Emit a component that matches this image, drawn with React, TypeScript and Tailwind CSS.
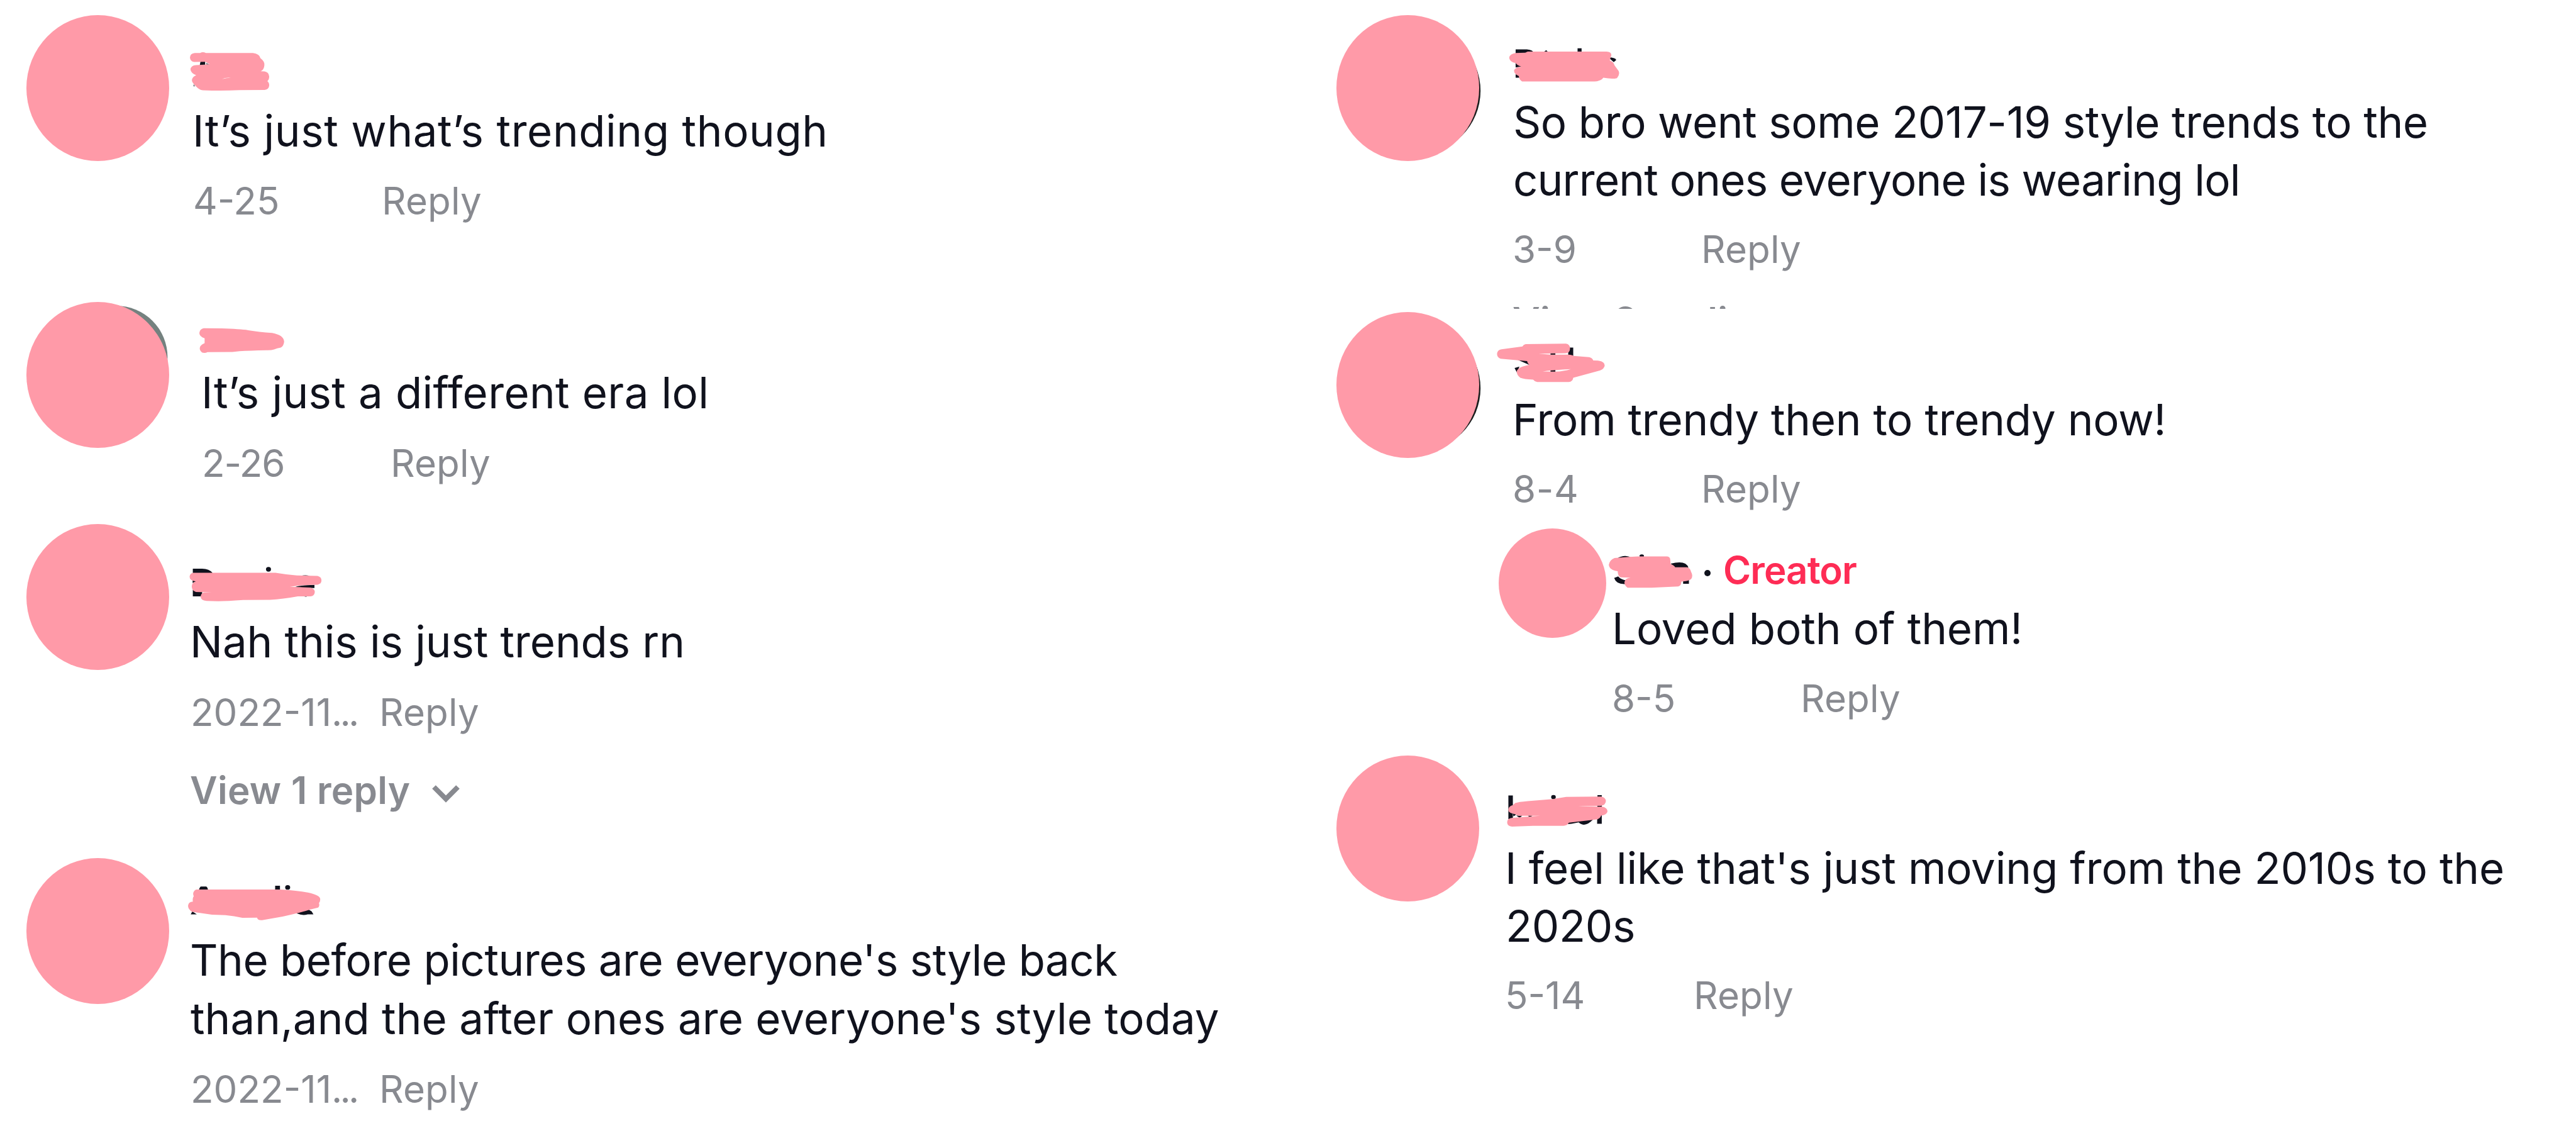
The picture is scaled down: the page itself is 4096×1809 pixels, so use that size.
import type { ReactNode } from "react";

const PINK = "#ff9aa8";
const INK = "#10121d";

/* Round avatar cover; `peek` is the part of the photo that shows at its rim. */
function Avatar({ className, peek }: { className: string; peek?: ReactNode }) {
  return (
    <svg viewBox="0 0 266 272" preserveAspectRatio="none" className={`block shrink-0 overflow-visible ${className}`}>
      {peek}
      <ellipse cx="133" cy="136" rx="133" ry="136" fill={PINK} />
    </svg>
  );
}

/* Brush marks over a user name. */
function Marker({ box, transform, ink, children }: { box: string; transform: string; ink?: ReactNode; children: ReactNode }) {
  return (
    <svg viewBox={box} className="block h-[119.5px] w-[256px] shrink-0 overflow-visible">
      <g transform={transform}>
        <g fill={INK}>{ink}</g>
        <g fill={PINK} fillRule="evenodd">{children}</g>
      </g>
    </svg>
  );
}

function Line({ className, children }: { className: string; children: ReactNode }) {
  return <p className={`whitespace-nowrap text-[69px] text-[#10121d] ${className}`}>{children}</p>;
}

function Meta({ className, date }: { className: string; date: ReactNode }) {
  return (
    <div className={`flex whitespace-nowrap text-[60px] leading-[72px] text-[#888a90] ${className}`}>
      <span className="w-[300px]">{date}</span>
      <span className="tracking-[0.2px]">Reply</span>
    </div>
  );
}

const cutDate = (
  <>
    2022-11<span className="tracking-[-3.8px]">...</span>
  </>
);

export default function App() {
  return (
    <main className="flex h-[1809px] w-[4096px] overflow-hidden bg-white pt-[24px] font-['Inter',sans-serif]">
      <div className="flex w-[2125px] flex-col pl-[42px]">
        <article className="flex h-[456px] shrink-0">
          <Avatar className="h-[232px] w-[227px]" />
          <div className="ml-[37px]">
            <div className="h-[138px]">
              <Marker
                box="359 28 300 140"
                transform="translate(340 80) scale(.33333)"
                ink={
                  <>
                    <path d="M102 104H128V124H98Z" />
                    <path d="M134 110L156 122H134Z" fill="#8a8088" />
                    <path d="M64 230L72 242H62Z" fill="#6f7077" />
                  </>
                }
              >
                <path d="M70 56L100 56Q115 47 132 56L395 56Q432 60 437 85Q462 103 459 125Q457 150 438 158L460 159Q484 163 486 187Q486 205 476 213Q487 222 486 238Q484 260 460 262L320 263Q230 268 115 264Q95 262 75 240Q53 220 54 207Q56 190 78 180Q48 168 46 148Q48 124 78 123L155 119L130 105L66 106Q44 102 43 80Q45 58 70 56ZM222 202Q245 190 275 195Q250 194 222 202Z" />
              </Marker>
            </div>
            <Line className="leading-[92px] tracking-[0.58px]">It’s just what’s trending though</Line>
            <Meta className="ml-[1px] mt-[29px]" date="4-25" />
          </div>
        </article>

        <article className="flex h-[353px] shrink-0">
          <Avatar className="h-[232px] w-[227px]" peek={<circle cx="167" cy="103" r="96" fill="#74817f" />} />
          <div className="ml-[51px]">
            <div className="h-[98px]">
              <Marker box="375 563 300 140" transform="translate(0 530) scale(.8929 .33333)">
                <path d="M425 246L462 247Q500 250 518 257Q540 267 568 272Q592 284 593 320Q592 345 586 354Q578 358 572 364Q566 370 556 369Q520 371 500 374L485 378L433 379Q428 386 422 382Q416 370 417 355Q418 338 427 329L427 302Q416 292 416 272Q417 250 425 246Z" />
              </Marker>
            </div>
            <Line className="leading-[92px] tracking-[0.35px]">It’s just a different era lol</Line>
            <Meta className="ml-[1px] mt-[30px]" date={<span className="tracking-[-1.2px]">2-26</span>} />
          </div>
        </article>

        <article className="flex h-[531px] shrink-0">
          <Avatar className="h-[232px] w-[227px]" />
          <div className="ml-[31px]">
            <div className="h-[141px]">
              <Marker
                box="351.6 976 300 140"
                transform="translate(340 1040) scale(.33333 .43367)"
                ink={
                  <>
                    <path d="M58 44H110Q150 45 168 62L150 70H58ZM57 95H90L57 106ZM58 135H110V163H58Z" />
                    <ellipse cx="481" cy="47" rx="14" ry="10" />
                    <path d="M660 76Q686 69 712 76ZM628 124Q650 116 738 114V127ZM678 162Q690 167 700 162Z" />
                  </>
                }
              >
                <path d="M60 62L520 62Q580 70 640 73L755 75Q777 80 777 94Q777 110 755 113Q680 113 600 122L715 125Q740 130 740 144Q738 162 715 163L645 163Q560 175 490 178L340 179Q250 184 200 184L135 183Q102 180 102 165Q102 150 120 147L165 146L75 144Q52 138 52 120Q53 103 75 99Q40 96 40 79Q42 64 60 62Z" />
              </Marker>
            </div>
            <Line className="ml-[2px] leading-[92px] tracking-[-0.1px]">Nah this is just trends rn</Line>
            <Meta className="ml-[3px] mt-[30px]" date={cutDate} />
            <div className="ml-[2px] mt-[52px] flex items-center text-[60px] leading-[72px] font-semibold tracking-[0.3px] text-[#888a90]">
              <span className="whitespace-nowrap">View 1 reply</span>
              <svg viewBox="0 0 44 28" className="ml-[35px] mt-[12px] h-[28px] w-[44px]" fill="none" stroke="currentColor" strokeWidth="8">
                <path d="M3 3L22 22L41 3" />
              </svg>
            </div>
          </div>
        </article>

        <article className="flex shrink-0">
          <Avatar className="h-[232px] w-[227px]" />
          <div className="ml-[32px]">
            <div className="h-[116px]">
              <Marker
                box="352.7 1599 300 140"
                transform="translate(340 1040) scale(.33333 .43367)"
                ink={
                  <>
                    <path d="M92 1426Q97 1411 104 1411H132Q140 1413 143 1426ZM518 1408H545V1428H518ZM46 1531L55 1518L80 1531ZM635 1522L700 1508L722 1518L732 1531H700Q670 1538 640 1527Z" />
                    <ellipse cx="588" cy="1415" rx="14" ry="10" />
                  </>
                }
              >
                <path d="M78 1424H545Q640 1428 700 1437Q770 1448 770 1466Q770 1477 763 1482Q768 1495 758 1502L715 1510Q660 1524 560 1540Q500 1548 450 1555Q420 1558 417 1545L335 1546Q290 1538 240 1534L165 1532L55 1520Q32 1510 31 1494Q33 1477 58 1476Q55 1460 63 1453Q57 1442 62 1435Q68 1425 78 1424Z" />
              </Marker>
            </div>
            <Line className="ml-[1px] leading-[93px] tracking-[-0.48px]">The before pictures are everyone's style back</Line>
            <Line className="ml-[2px] leading-[93px] tracking-[0.02px]">than,and the after ones are everyone's style today</Line>
            <Meta className="ml-[2px] mt-[29px]" date={cutDate} />
          </div>
        </article>
      </div>

      <div className="flex flex-1 flex-col">
        <article className="flex h-[472px] shrink-0">
          <Avatar className="h-[232px] w-[227px]" peek={<circle cx="150.5" cy="141" r="118" fill="#1b1d1d" />} />
          <div className="ml-[52px]">
            <div className="h-[124px]">
              <Marker
                box="2817.7 28 300 140"
                transform="translate(2450 0) scale(1.4987 .38265)"
                ink={
                  <path d="M250 240H264Q272 242 273 260H250ZM284 255L288 244L291 255ZM327 235H332V255H327ZM365 278Q375 280 375 292L372 302ZM368 312L375 336H368ZM250 303L259 322L250 328ZM250 362H255V378H250Z" />
                }
              >
                <path d="M250 258L262 256L265 251H363Q369 252 369 268L367 294Q372 302 373 318L378 345Q380 362 376 380Q370 386 359 378Q356 395 348 396H258Q254 385 254 370Q248 360 248 342Q250 326 257 324Q252 318 250 307Q242 300 242 280Q243 262 250 258Z" />
              </Marker>
            </div>
            <Line className="ml-[2px] leading-[92px] tracking-[-0.4px]">So bro went some 2017-19 style trends to the</Line>
            <Line className="ml-[2px] leading-[92px] tracking-[-0.8px]">current ones everyone is wearing lol</Line>
            <Meta className="ml-[1px] mt-[28px]" date="3-9" />
            <div className="ml-[1px] mt-[42px] h-[17px] overflow-hidden whitespace-nowrap text-[60px] leading-[72px] font-semibold tracking-[0.3px] text-[#888a90]">
              View 2 replies
            </div>
          </div>
        </article>

        <article className="flex h-[344px] shrink-0">
          <Avatar className="h-[232px] w-[227px]" peek={<circle cx="150.5" cy="142" r="118" fill="#1b1d1d" />} />
          <div className="ml-[52px]">
            <div className="h-[125px]">
              <Marker
                box="2817.7 581 300 140"
                transform="translate(2780 620) scale(.33333)"
                ink={<path d="M146 150L205 150L214 180ZM128 196L155 188L142 222ZM432 82H456V130H428V110ZM329 110H356V124H329ZM329 205H356V220H329Z" />}
              >
                <path d="M190 62L415 60Q440 64 438 90Q436 112 412 113L262 116L330 121L430 121Q450 122 458 128L545 135Q562 138 568 154L600 155Q632 160 632 182Q630 200 605 210L456 250Q454 272 430 274L255 274Q240 272 232 261Q180 258 160 250Q140 235 140 215Q145 190 210 178Q200 170 198 157L50 144Q30 138 30 117Q32 94 55 91L172 75Q178 64 190 62ZM285 215Q340 207 443 202Q400 215 360 216Z" />
              </Marker>
            </div>
            <Line className="ml-[1px] leading-[92px] tracking-[-0.25px]">From trendy then to trendy now!</Line>
            <Meta className="ml-[1px] mt-[28px]" date={<span className="tracking-[0.6px]">8-4</span>} />
          </div>
        </article>

        <article className="ml-[258px] flex h-[361px] shrink-0">
          <Avatar className="h-[174px] w-[171px]" />
          <div className="ml-[9px]">
            <div className="flex h-[113px]">
              <div className="w-[147px]">
                <Marker
                  box="3003.6 985 300 140"
                  transform="translate(2750 960) scale(.8291 .33333)"
                  ink={
                    <>
                      <path d="M318 242Q335 218 350 238ZM438 272Q472 250 478 294L450 300ZM466 356H479V384H466ZM311 352L320 343Q326 362 340 366V385Q316 392 311 352Z" />
                      <ellipse cx="373" cy="229" rx="5" ry="9" />
                    </>
                  }
                >
                  <path d="M312 240L345 234L365 231H430Q437 233 437 250L438 275Q446 280 448 292H475Q482 297 484 318Q489 340 484 358Q478 370 462 372Q462 395 455 399L395 406H341Q334 395 334 375Q336 352 348 350L325 348Q319 340 319 314Q300 308 299 278Q301 250 312 240Z" />
                </Marker>
              </div>
              <span className="mt-[66px] size-[10px] rounded-full bg-[#10121d]" />
              <span className="ml-[20px] mt-[30px] text-[60px] leading-[72px] font-semibold tracking-[-0.9px] text-[#fe2c55]">Creator</span>
            </div>
            <Line className="leading-[92px] tracking-[-0.1px]">Loved both of them!</Line>
            <Meta className="mt-[29px]" date="8-5" />
          </div>
        </article>

        <article className="flex shrink-0">
          <Avatar className="h-[232px] w-[227px]" />
          <div className="ml-[41px]">
            <div className="h-[133px]">
              <Marker
                box="2804.3 1407 300 140"
                transform="translate(2780 1020) scale(.33333 .33801)"
                ink={
                  <>
                    <path d="M92 1365H117V1495H92ZM117 1455L140 1468L120 1480ZM136 1476H170L155 1488ZM200 1476H228L212 1485ZM590 1363H614V1521H588ZM425 1505L480 1505Q510 1500 565 1498Q520 1545 485 1513L445 1521L425 1523Z" />
                    <ellipse cx="344" cy="1374" rx="13" ry="12" />
                  </>
                }
              >
                <path d="M130 1407Q150 1400 200 1396L340 1385L415 1373L612 1371Q637 1378 637 1396Q635 1418 610 1422Q480 1424 475 1425L618 1427Q646 1434 646 1453Q643 1473 610 1476Q605 1495 580 1498L430 1515Q420 1532 400 1532L230 1532L112 1537Q85 1533 85 1512Q86 1490 115 1488L270 1477L150 1477Q138 1472 128 1468Q92 1462 91 1443Q95 1422 118 1418Z" />
              </Marker>
            </div>
            <Line className="leading-[92px] tracking-[-0.15px]">I feel like that's just moving from the 2010s to the</Line>
            <Line className="ml-[1px] leading-[92px] tracking-[-0.3px]">2020s</Line>
            <Meta className="mt-[28px]" date="5-14" />
          </div>
        </article>
      </div>
    </main>
  );
}
